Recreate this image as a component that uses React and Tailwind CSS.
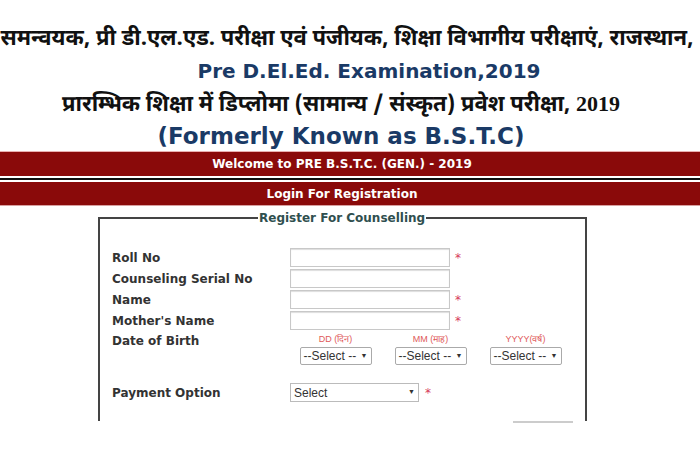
import React from 'react';

const hindi = { fontFamily: '"Noto Sans Devanagari", "Lohit Devanagari", "Noto Sans", "Liberation Sans", sans-serif' };
const verdana = { fontFamily: '"DejaVu Sans", Verdana, sans-serif' };
const arial = { fontFamily: '"Liberation Sans", Arial, sans-serif' };
const serif = { fontFamily: '"Liberation Serif", "Times New Roman", serif' };

const TextRow = ({ label, star }) => (
  <div className="flex items-center h-[21px]">
    <div className="w-[178px] text-[12px] font-bold text-[#333]">{label}</div>
    <input className="w-[160px] h-[19px] border border-[#c8c8c8] bg-white shadow-[inset_0_1px_1px_#ddd]" />
    {star && <span className="ml-[5px] text-[#d63a5a] text-[12px]">*</span>}
  </div>
);

const DateSelect = ({ label }) => (
  <div className="flex flex-col items-center w-[95px]">
    <span className="text-[9px] text-[#e05a5a] leading-[12px]" style={arial}>{label}</span>
    <div className="mt-[2px] w-[72px] h-[18px] border border-[#aaa] rounded-[2px] flex items-center justify-between px-[3px] text-[12px] text-[#333]" style={arial}>
      <span>--Select --</span>
      <span className="text-[7px]">▼</span>
    </div>
  </div>
);

const App = () => {
  return (
    <div className="w-[700px] h-[450px] bg-white overflow-hidden" style={verdana}>
      {/* Header */}
      <div className="pt-[25px] flex flex-col items-center">
        <div className="w-full flex justify-center">
          <div className="whitespace-nowrap text-[22px] font-bold text-[#111] leading-[30px] pr-[6px]" style={hindi}>
            समन्वयक, प्री डी.एल.एड. परीक्षा एवं पंजीयक, शिक्षा विभागीय परीक्षाएं, राजस्थान,
          </div>
        </div>
        <div className="text-[20px] font-bold text-[#1a3a66] leading-[32px] pl-[38px]">
          Pre D.El.Ed. Examination,2019
        </div>
        <div className="whitespace-nowrap text-[22px] font-bold text-[#111] leading-[33px] pr-[18px]" style={hindi}>
          प्रारम्भिक शिक्षा में डिप्लोमा (सामान्य / संस्कृत) प्रवेश परीक्षा, <span style={serif}>2019</span>
        </div>
        <div className="text-[23px] font-bold text-[#1a3a66] leading-[29px] pr-[18px]">
          (Formerly Known as B.S.T.C)
        </div>
      </div>

      {/* Banners */}
      <div className="border-t border-[#e8b0b0] bg-[#8a0a0a] h-[25px] flex items-center justify-center pr-[16px] text-white text-[12px] font-bold">
        Welcome to PRE B.S.T.C. (GEN.) - 2019
      </div>
      <div className="h-[2px] bg-white" />
      <div className="h-[2px] bg-[#111]" />
      <div className="h-[2px] bg-white" />
      <div className="bg-[#8a0a0a] h-[24px] flex items-center justify-center pr-[16px] text-white text-[12px] font-bold border-b border-[#d8a0a0]">
        Login For Registration
      </div>

      {/* Form */}
      <fieldset className="ml-[98px] mt-[3px] w-[489px] min-w-0 h-[212px] border-x-2 border-t-2 border-b-0 border-[#444] px-[12px]">
        <legend className="px-[1px] ml-[146px] text-[12px] font-bold text-[#2f4f4f]">Register For Counselling</legend>
        <div className="pt-[20px] flex flex-col">
          <TextRow label="Roll No" star />
          <TextRow label="Counseling Serial No" />
          <TextRow label="Name" star />
          <TextRow label="Mother's Name" star />
          <div className="flex mt-[2px]">
            <div className="w-[176px] text-[12px] font-bold text-[#333] leading-[16px]">Date of Birth</div>
            <DateSelect label="DD (दिन)" />
            <DateSelect label="MM (माह)" />
            <DateSelect label="YYYY(वर्ष)" />
          </div>
          <div className="flex items-center mt-[18px]">
            <div className="w-[178px] text-[12px] font-bold text-[#333]">Payment Option</div>
            <div className="w-[129px] h-[19px] border border-[#bbb] flex items-center justify-between px-[3px] text-[12px] text-[#333]" style={arial}>
              <span>Select</span>
              <span className="text-[7px]">▼</span>
            </div>
            <span className="ml-[6px] text-[#d63a5a] text-[12px]">*</span>
          </div>
          <div className="flex justify-end mt-[19px]">
            <div className="w-[60px] h-[2px] bg-[#ccc]" />
          </div>
        </div>
      </fieldset>
    </div>
  );
};

export default App;
